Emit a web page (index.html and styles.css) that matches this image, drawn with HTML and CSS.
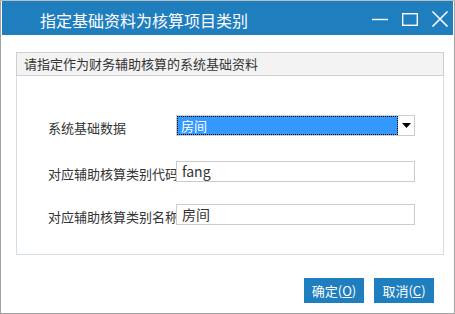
FILE: index.html
```html
<!DOCTYPE html>
<html lang="zh-CN">
<head>
  <meta charset="UTF-8" />
  <title>指定基础资料为核算项目类别</title>
  <link rel="stylesheet" href="styles.css">
</head>
<body>
  <div class="window">
    <div class="titlebar">
      <span class="title">指定基础资料为核算项目类别</span>
      <div class="controls">
        <svg class="ctl" width="18" height="18" viewBox="0 0 18 18">
          <line x1="1" y1="9.5" x2="17" y2="9.5" stroke="#fff" stroke-width="1.4"/>
        </svg>
        <svg class="ctl" width="18" height="18" viewBox="0 0 18 18">
          <rect x="1.7" y="3.7" width="14.6" height="11.6" fill="none" stroke="#fff" stroke-width="1.4"/>
        </svg>
        <svg class="ctl" width="18" height="18" viewBox="0 0 18 18">
          <path d="M1.5 1.5 L16.5 16.5 M16.5 1.5 L1.5 16.5" stroke="#fff" stroke-width="1.6"/>
        </svg>
      </div>
    </div>

    <div class="content">
      <div class="group">
        <div class="group-header">请指定作为财务辅助核算的系统基础资料</div>
        <div class="group-body">
          <div class="row row-first">
            <div class="label">系统基础数据</div>
            <div class="select">
              <div class="select-value">房间</div>
              <div class="select-arrow">
                <svg width="9" height="5" viewBox="0 0 9 5"><path d="M0 0 H9 L4.5 5 Z" fill="#000"/></svg>
              </div>
            </div>
          </div>
          <div class="row row-code">
            <div class="label">对应辅助核算类别代码</div>
            <div class="input">fang</div>
          </div>
          <div class="row row-name">
            <div class="label">对应辅助核算类别名称</div>
            <div class="input">房间</div>
          </div>
        </div>
      </div>

      <div class="buttons">
        <button class="btn">确定(<u>O</u>)</button>
        <button class="btn">取消(<u>C</u>)</button>
      </div>
    </div>
  </div>
</body>
</html>
```

FILE: styles.css
```css
body {
  margin: 0;
  font-family: "Noto Sans CJK SC", "Noto Sans", sans-serif;
  background: #fff;
  color: #333;
}

.window {
  width: 455px;
  height: 314px;
  box-sizing: border-box;
  border: 1px solid #a3a3a3;
  border-top: 1px solid #bdbdbd;
  padding: 0 1px;
  background: #fff;
}

.titlebar {
  height: 34px;
  background: #1f7ebd;
  display: flex;
  align-items: center;
  justify-content: space-between;
}

.title {
  color: #fff;
  font-size: 16px;
  padding-left: 38px;
  padding-top: 3px;
  line-height: 20px;
}

.controls {
  display: flex;
  gap: 12px;
  padding-right: 4px;
  padding-top: 2px;
}

.ctl {
  display: block;
}

.content {
  padding-top: 17px;
}

.group {
  width: 428px;
  height: 203px;
  box-sizing: border-box;
  margin-left: 14px;
  border: 1px solid #d5dde6;
}

.group-header {
  height: 22px;
  line-height: 22px;
  background: #f3f3f3;
  border: 1px solid #cfcfcf;
  margin: -1px -1px 0 -1px;
  padding-left: 7px;
  font-size: 13px;
  color: #333;
}

.group-body {
  padding-left: 31px;
}

.row {
  display: flex;
  height: 21px;
}

.row-first {
  margin-top: 39px;
}

.row-code {
  margin-top: 25px;
}

.row-name {
  margin-top: 22px;
}

.label {
  width: 128px;
  height: 21px;
  line-height: 25px;
  font-size: 13px;
  white-space: nowrap;
  overflow: hidden;
  color: #333;
}

.select {
  width: 239px;
  height: 21px;
  box-sizing: border-box;
  border: 1px solid #cccccc;
  display: flex;
}

.select-value {
  flex: 1;
  background: #3399ff;
  border: 1px dotted #000;
  color: #fff;
  font-size: 13px;
  line-height: 17px;
  padding-left: 3px;
}

.select-arrow {
  width: 16px;
  display: flex;
  align-items: center;
  justify-content: center;
  background: #fff;
}

.input {
  width: 239px;
  height: 21px;
  box-sizing: border-box;
  border: 1px solid #cccccc;
  font-size: 14px;
  line-height: 19px;
  padding-left: 5px;
  color: #333;
}

.buttons {
  display: flex;
  justify-content: flex-end;
  gap: 10px;
  margin-top: 23px;
  padding-right: 19px;
}

.btn {
  width: 60px;
  height: 25px;
  border: none;
  background: #1f7ebd;
  color: #fff;
  font-family: "Noto Sans CJK SC", "Noto Sans", sans-serif;
  font-size: 13px;
  padding: 0;
  line-height: 25px;
}
```
